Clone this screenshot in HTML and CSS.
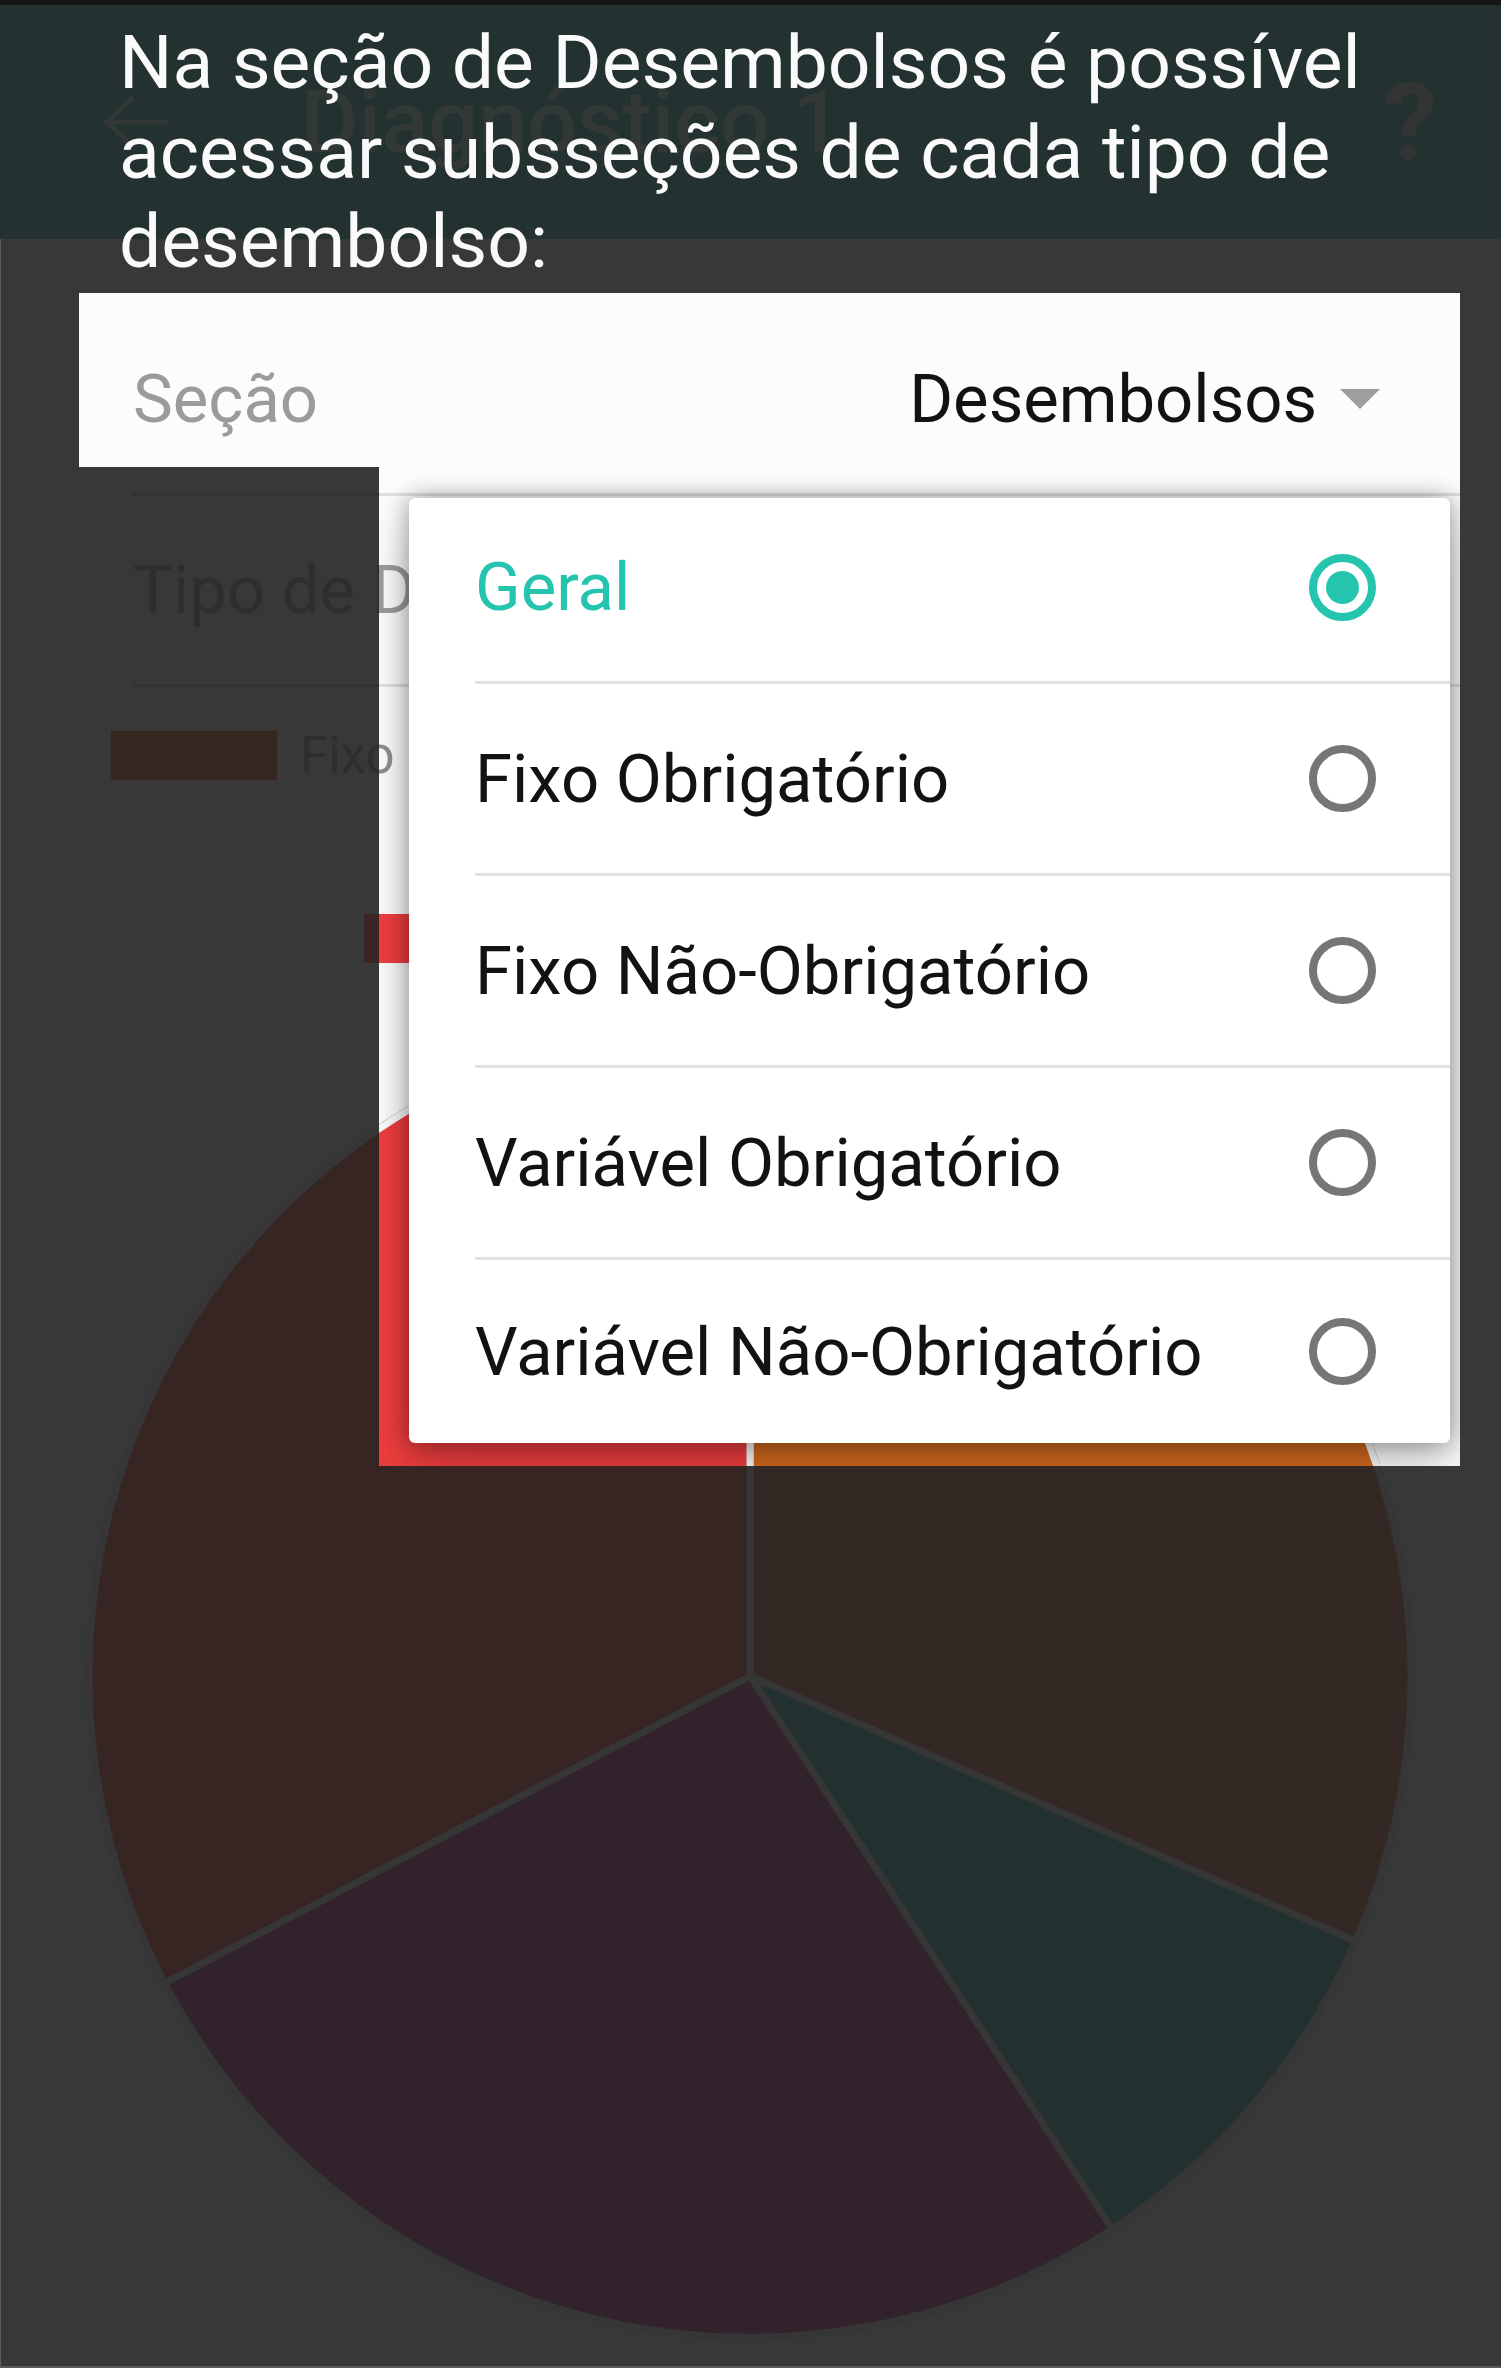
FILE: index.html
```html
<!DOCTYPE html>
<html lang="pt-BR">
<head>
<meta charset="utf-8">
<title>Diagnóstico 1</title>
<link rel="stylesheet" href="styles.css">
</head>
<body>
<div class="screen">
  <div class="statusbar"></div>
  <header class="appbar">
    <svg class="back" width="66" height="54" viewBox="0 0 66 54"><path d="M66 27H5M31 2L5 27L31 52" fill="none" stroke="#323836" stroke-width="5"/></svg>
    <span class="title">Diagnóstico 1</span>
    <span class="help">?</span>
  </header>
  <main class="content">
    <div class="row">
      <span class="label">Seção</span>
      <span class="value">Desembolsos<span class="caret"></span></span>
    </div>
    <div class="rule"></div>
    <div class="row">
      <span class="label tipo">Tipo de Desembolso</span>
    </div>
    <div class="rule"></div>
    <div class="legend legend-one"><span class="swatch swatch-fixo"></span><span class="legend-text">Fixo</span></div>
    <div class="legend legend-two"><span class="swatch swatch-geral"></span></div>
    <svg class="pie" width="1330" height="1330" viewBox="0 0 1330 1330">
      <defs><clipPath id="lit"><rect x="294" y="-600" width="1081" height="1055"/></clipPath></defs>
      <g stroke="#363636" stroke-width="7" stroke-linejoin="round">
        <path fill="#332823" d="M665 665 L665 4 A661 661 0 0 1 1270.5 930.2 Z"/>
        <path fill="#223130" d="M665 665 L1270.5 930.2 A661 661 0 0 1 1027 1218.1 Z"/>
        <path fill="#32222b" d="M665 665 L1027 1218.1 A661 661 0 0 1 79.7 972.2 Z"/>
        <path fill="#372524" d="M665 665 L79.7 972.2 A661 661 0 0 1 665 4 Z"/>
      </g>
      <g clip-path="url(#lit)" stroke="#fcfcfc" stroke-width="7" stroke-linejoin="round">
        <path fill="#d2691e" d="M665 665 L665 4 A661 661 0 0 1 1270.5 930.2 Z"/>
        <path fill="#26a69a" d="M665 665 L1270.5 930.2 A661 661 0 0 1 1027 1218.1 Z"/>
        <path fill="#8e44ad" d="M665 665 L1027 1218.1 A661 661 0 0 1 79.7 972.2 Z"/>
        <path fill="#ef3e3e" d="M665 665 L79.7 972.2 A661 661 0 0 1 665 4 Z"/>
      </g>
    </svg>
  </main>
  <div class="spot spot-top"></div>
  <div class="spot spot-window"></div>
  <p class="hint">Na seção de Desembolsos é possível acessar subsseções de cada tipo de desembolso:</p>
  <div class="menu-window">
    <ul class="menu">
      <li class="menu-item selected"><span class="opt">Geral</span>
        <svg class="radio" width="67" height="67" viewBox="0 0 67 67"><circle cx="33.5" cy="33.5" r="29.5" fill="none" stroke="#25c4ae" stroke-width="8"/><circle cx="33.5" cy="33.5" r="16.5" fill="#25c4ae"/></svg></li>
      <li class="menu-item"><span class="opt">Fixo Obrigatório</span>
        <svg class="radio" width="67" height="67" viewBox="0 0 67 67"><circle cx="33.5" cy="33.5" r="29.5" fill="none" stroke="#767676" stroke-width="8"/></svg></li>
      <li class="menu-item"><span class="opt">Fixo Não-Obrigatório</span>
        <svg class="radio" width="67" height="67" viewBox="0 0 67 67"><circle cx="33.5" cy="33.5" r="29.5" fill="none" stroke="#767676" stroke-width="8"/></svg></li>
      <li class="menu-item"><span class="opt">Variável Obrigatório</span>
        <svg class="radio" width="67" height="67" viewBox="0 0 67 67"><circle cx="33.5" cy="33.5" r="29.5" fill="none" stroke="#767676" stroke-width="8"/></svg></li>
      <li class="menu-item"><span class="opt">Variável Não-Obrigatório</span>
        <svg class="radio" width="67" height="67" viewBox="0 0 67 67"><circle cx="33.5" cy="33.5" r="29.5" fill="none" stroke="#767676" stroke-width="8"/></svg></li>
    </ul>
  </div>
</div>
</body>
</html>
```

FILE: styles.css
```css
* { box-sizing: border-box; }
html, body { margin: 0; padding: 0; }
body {
  background: #383838;
  font-family: Roboto, "Noto Sans", "Liberation Sans", sans-serif;
}
.screen {
  position: relative;
  z-index: 0;
  width: 1501px;
  height: 2368px;
  overflow: hidden;
  background: #383838;
  box-shadow: inset 1px 0 #5a5a5a, inset 0 -2px #5a5a5a;
}
.statusbar { height: 5px; background: #161616; }
.appbar {
  height: 234px;
  background: #233130;
  display: flex;
  align-items: center;
  padding: 0 64px 0 102px;
  color: #313836;
}
.back { display: block; flex: none; }
.title {
  margin-left: 133px;
  font-size: 88px;
  font-weight: 500;
  line-height: 1;
}
.help {
  margin-left: auto;
  font-size: 108px;
  font-weight: 700;
  line-height: 1;
  color: #333535;
}
.content { padding-top: 66px; }
.row {
  display: flex;
  align-items: center;
  justify-content: space-between;
  height: 188px;
  margin-left: 133px;
  width: 1327px;
  padding-right: 80px;
  font-size: 67px;
}
.label { color: #9b9b9b; }
.value { display: flex; align-items: center; color: #121212; }
.caret {
  width: 0; height: 0;
  border-left: 20.5px solid transparent;
  border-right: 20.5px solid transparent;
  border-top: 20px solid #9e9e9e;
  margin-left: 23px;
}
.rule {
  height: 3px;
  margin-left: 133px;
  width: 1327px;
  background: linear-gradient(to right, #323232 246px, #e0e0e0 246px);
}
.tipo {
  background: linear-gradient(to right, #2e2e2e 246px, #9b9b9b 246px);
  -webkit-background-clip: text;
  background-clip: text;
  color: transparent;
}
.legend { display: flex; align-items: center; height: 49px; }
.legend-one { margin-top: 44px; padding-left: 111px; }
.legend-two { margin-top: 134px; padding-left: 364px; }
.swatch { display: block; width: 166px; height: 49px; }
.swatch-fixo { background: #35271f; }
.swatch-geral { background: linear-gradient(to right, #3a2424 15px, #ef3e3e 15px); }
.legend-text {
  font-size: 51px;
  line-height: 49px;
  margin-left: 23px;
  background: linear-gradient(to right, #2e2e2e 79px, #8e8e8e 79px);
  -webkit-background-clip: text;
  background-clip: text;
  color: transparent;
}
.pie { display: block; margin: 48px 0 0 85px; }
.spot { position: absolute; z-index: -1; background: #fcfcfc; }
.spot-top { left: 79px; top: 293px; width: 1381px; height: 174px; }
.spot-window { left: 379px; top: 467px; width: 1081px; height: 999px; }
.hint {
  position: absolute;
  left: 119px;
  top: 18px;
  width: 1320px;
  margin: 0;
  font-size: 75px;
  line-height: 89.5px;
  color: #fafafa;
}
.menu-window {
  position: absolute;
  left: 379px;
  top: 467px;
  width: 1081px;
  height: 999px;
  overflow: hidden;
  padding: 31px 0 0 30px;
}
.menu {
  list-style: none;
  margin: 0;
  padding: 0;
  width: 1041px;
  height: 945px;
  background: #fff;
  border-radius: 6px;
  box-shadow: 0 0 24px rgba(0, 0, 0, 0.38), 0 24px 48px rgba(0, 0, 0, 0.2);
  overflow: hidden;
}
.menu-item {
  display: flex;
  align-items: center;
  justify-content: space-between;
  margin-left: 66px;
  padding-right: 74px;
  height: 192px;
  border-top: 3px solid #e0e0e0;
  font-size: 67px;
  color: #121212;
}
.menu-item:first-child { height: 183px; border-top: 0; padding-bottom: 5px; }
.menu-item:last-child { height: 186px; }
.menu-item.selected .opt { color: #25c4ae; }
.radio { display: block; flex: none; }
```
